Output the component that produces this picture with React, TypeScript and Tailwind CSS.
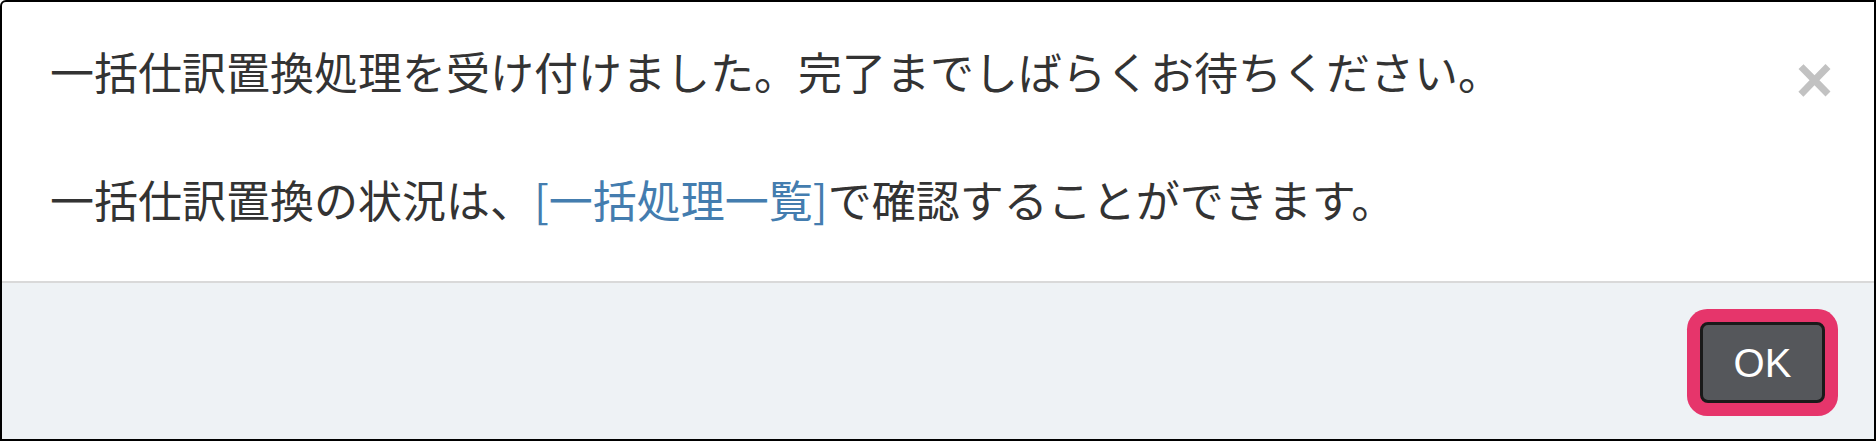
import React from 'react';

const jp = "font-['Noto_Sans_CJK_JP','Noto_Sans',sans-serif]";

export default function App() {
  return (
    <div className="w-[1876px] h-[441px] border-2 border-black rounded-tl-[6px] bg-white flex flex-col overflow-hidden">
      {/* body */}
      <div className="flex items-start pl-[48px] pr-[41px] pt-[37px] pb-[50px]">
        <div className={`flex-1 flex flex-col gap-[64px] text-[44px] leading-[64px] text-[#333333] ${jp}`}>
          <p>一括仕訳置換処理を受け付けました。完了までしばらくお待ちください。</p>
          <p>
            一括仕訳置換の状況は、
            <a href="#" className="text-[#447daf]" onClick={e => e.preventDefault()}>[一括処理一覧]</a>
            で確認することができます。
          </p>
        </div>
        <button
          type="button"
          className="mt-[9px] text-[64px] leading-none font-bold text-[#c2c2c2] font-['Liberation_Sans',Arial,sans-serif]"
        >
          &times;
        </button>
      </div>

      {/* footer */}
      <div className="flex-1 border-t-2 border-[#d9d9d9] bg-[#eef2f5] flex justify-end items-start pt-[39px] pr-[49px]">
        <button
          type="button"
          className="w-[125px] h-[81px] rounded-[8px] border-[3px] border-[#1a1a1a] bg-[#55575b] text-white text-[40px] flex items-center justify-center shadow-[0_0_0_13px_#e6356b] font-['Liberation_Sans',Arial,sans-serif]"
        >
          OK
        </button>
      </div>
    </div>
  );
}
